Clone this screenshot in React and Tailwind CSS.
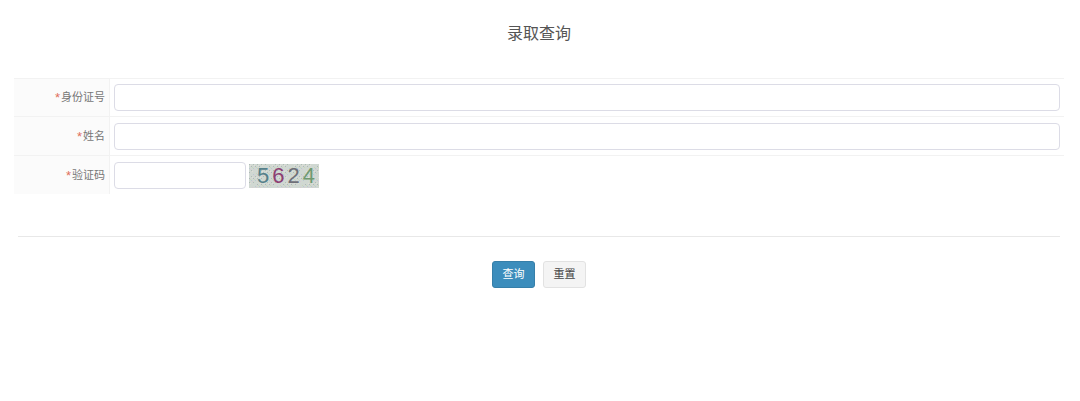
const FONT = "font-['Liberation_Sans','Noto_Sans_CJK_SC',sans-serif]";

const NOISE = Array.from({ length: 300 }, (_, i) => ({
    x: (i * 37) % 70,
    y: (i * 53) % 24,
    fill: ["#b0bdb6", "#d8cad3", "#bac8d2", "#cad5ba", "#aeb8b8", "#e2ded6"][i % 6],
}));

const FormRow = ({ label, children, first }) => (
    <div className={`flex border-t border-[#f2f2f2] ${first ? "h-[38px]" : "h-[39px]"}`}>
        <div className="w-[96px] shrink-0 bg-[#fbfbfb] border-r border-[#f2f2f2] flex items-center justify-end pr-[4px] text-[11px] text-[#777]">
            <span className="text-[13px] leading-none text-[#e0705c] mr-[1px]">*</span>
            {label}
        </div>
        <div className={`flex-1 flex items-center pl-[4px] pr-[4px] ${first ? "" : "pt-[1px]"}`}>{children}</div>
    </div>
);

const Captcha = () => (
    <div className="relative ml-[3px] mt-[1px] w-[70px] h-[24px] bg-[#d0d8d2] flex items-center justify-center gap-[3px] pl-[4px] text-[22px] leading-none">
        <svg className="absolute inset-0" width="70" height="24" viewBox="0 0 70 24">
            {NOISE.map((n, i) => (
                <rect key={i} x={n.x} y={n.y} width="1" height="1" fill={n.fill} />
            ))}
        </svg>
        <span className="relative text-[#55808a]">5</span>
        <span className="relative text-[#8c3f72]">6</span>
        <span className="relative text-[#6e7078]">2</span>
        <span className="relative text-[#6f9a70]">4</span>
    </div>
);

export default function App() {
    return (
        <div className={`w-[1080px] h-[401px] bg-white overflow-hidden ${FONT}`}>
            <h1 className="pt-[23px] pr-[2px] h-[78px] text-center text-[16px] leading-[22px] font-normal text-[#555]">录取查询</h1>
            <div className="mx-[14px] w-[1050px]">
                <FormRow label="身份证号" first>
                    <input className="w-full h-[27px] bg-white border border-[#dcdce6] rounded-[4px]" />
                </FormRow>
                <FormRow label="姓名">
                    <input className="w-full h-[27px] bg-white border border-[#dcdce6] rounded-[4px]" />
                </FormRow>
                <FormRow label="验证码">
                    <input className="w-[132px] h-[27px] bg-white border border-[#dcdce6] rounded-[4px]" />
                    <Captcha />
                </FormRow>
            </div>
            <div className="ml-[18px] w-[1042px] mt-[42px] border-t border-[#e8e8e8]" />
            <div className="mt-[24px] flex justify-center gap-[8px] pr-[2px]">
                <button className="w-[43px] h-[27px] rounded-[3px] bg-[#3c8dbc] border border-[#367fa9] text-white text-[11px]">查询</button>
                <button className="w-[43px] h-[27px] rounded-[3px] bg-[#f4f4f4] border border-[#e2e2e2] text-[#444] text-[11px]">重置</button>
            </div>
        </div>
    );
}
